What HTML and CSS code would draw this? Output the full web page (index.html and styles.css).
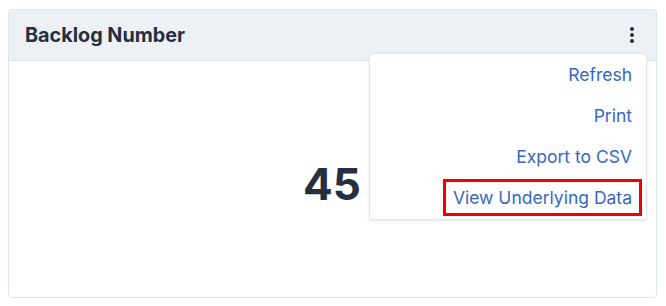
FILE: index.html
```html
<!DOCTYPE html>
<html>
<head>
<meta charset="utf-8">
<link rel="stylesheet" href="styles.css">
</head>
<body>
<div class="card">
  <div class="card-header">
    <div class="title">Backlog Number</div>
    <div class="kebab"><span></span><span></span><span></span></div>
  </div>
  <div class="card-body">
    <div class="value">45</div>
  </div>
  <div class="menu">
    <div class="item">Refresh</div>
    <div class="item">Print</div>
    <div class="item">Export to CSV</div>
    <div class="item"><span class="hl">View Underlying Data</span></div>
  </div>
</div>
</body>
</html>
```
FILE: styles.css
```css
html, body { margin: 0; padding: 0; background: #fff; }
body {
  font-family: Inter, "Noto Sans", sans-serif;
  padding: 9px 9px 0 8px;
  width: 666px;
  box-sizing: border-box;
}
.card {
  position: relative;
  width: 649px;
  height: 289px;
  box-sizing: border-box;
  border: 1px solid #dfe5ec;
  border-radius: 4px;
  display: flex;
  flex-direction: column;
  overflow: hidden;
}
.card-header {
  height: 51px;
  box-sizing: border-box;
  background: #edf1f6;
  border-bottom: 1px solid #dfe5ec;
  display: flex;
  align-items: center;
  justify-content: space-between;
  padding: 0 22px 0 16px;
}
.title {
  font-size: 19.8px;
  font-weight: 700;
  color: #252f3e;
  margin-top: -1px;
}
.kebab {
  display: flex;
  flex-direction: column;
  gap: 2px;
  align-items: center;
}
.kebab span {
  width: 4px;
  height: 4px;
  border-radius: 50%;
  background: #252f3e;
}
.card-body {
  flex: 1;
  display: flex;
  align-items: center;
  justify-content: center;
}
.value {
  font-size: 44px;
  font-weight: 700;
  color: #252f3e;
  margin-top: 10px;
  margin-left: -1px;
}
.menu {
  position: absolute;
  top: 43px;
  right: 9px;
  width: 278px;
  box-sizing: border-box;
  background: #fff;
  border: 1px solid #e3e8ee;
  border-radius: 4px;
  box-shadow: 0 1px 3px rgba(30, 40, 60, 0.12);
  padding-bottom: 1px;
}
.item {
  height: 41px;
  display: flex;
  align-items: center;
  justify-content: flex-end;
  padding-right: 14px;
  font-size: 17.5px;
  color: #3668c0;
}
.hl {
  display: inline-block;
  line-height: 25px;
  padding: 3px 7px;
  border: 3px solid #f00000;
  margin-right: -10px;
}
```
